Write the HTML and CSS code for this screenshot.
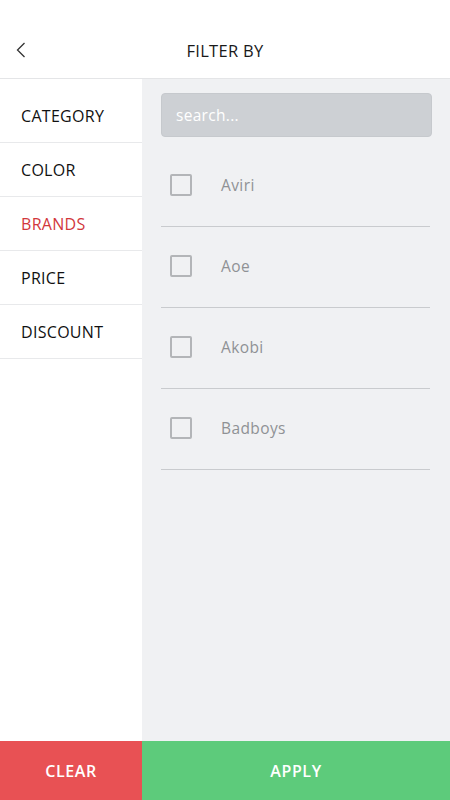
FILE: index.html
```html
<!DOCTYPE html>
<html>
<head>
<meta charset="utf-8">
<link rel="stylesheet" href="styles.css">
</head>
<body>
<div class="app">
  <header class="header">
    <button class="back" aria-label="Back">
      <svg width="10" height="16" viewBox="0 0 10 16"><path d="M8.5 1 L1.5 8 L8.5 15" fill="none" stroke="#333" stroke-width="1.3"/></svg>
    </button>
    <h1 class="title">FILTER BY</h1>
  </header>
  <div class="body">
    <nav class="menu">
      <div class="menu-item">CATEGORY</div>
      <div class="menu-item">COLOR</div>
      <div class="menu-item active">BRANDS</div>
      <div class="menu-item">PRICE</div>
      <div class="menu-item">DISCOUNT</div>
    </nav>
    <section class="panel">
      <div class="search">search...</div>
      <ul class="list">
        <li class="row"><span class="box"></span><span class="label">Aviri</span></li>
        <li class="row"><span class="box"></span><span class="label">Aoe</span></li>
        <li class="row"><span class="box"></span><span class="label">Akobi</span></li>
        <li class="row"><span class="box"></span><span class="label">Badboys</span></li>
      </ul>
    </section>
  </div>
  <footer class="footer">
    <button class="btn clear">CLEAR</button>
    <button class="btn apply">APPLY</button>
  </footer>
</div>
</body>
</html>
```
FILE: styles.css
```css
* { box-sizing: border-box; }
html, body { margin: 0; padding: 0; }
body {
  font-family: "Open Sans", "Noto Sans", sans-serif;
  background: #fff;
}
.app {
  width: 450px;
  height: 800px;
  display: flex;
  flex-direction: column;
}
.header {
  height: 79px;
  flex: none;
  position: relative;
  display: flex;
  align-items: center;
  justify-content: center;
  border-bottom: 1px solid #e4e5e7;
  padding-top: 22px;
}
.back {
  position: absolute;
  left: 16px;
  top: 42px;
  border: 0;
  background: none;
  padding: 0;
  display: flex;
}
.title {
  margin: 0;
  font-size: 16.5px;
  font-weight: 400;
  color: #1a1a1a;
  letter-spacing: 0.3px;
}
.body {
  flex: 1;
  display: flex;
  min-height: 0;
}
.menu {
  width: 142px;
  flex: none;
  background: #fff;
  padding-top: 10px;
}
.menu-item {
  height: 54px;
  border-bottom: 1px solid #e8e9eb;
  display: flex;
  align-items: center;
  padding-left: 21px;
  font-size: 16px;
  color: #111;
  letter-spacing: 0.3px;
}
.menu-item.active { color: #d2373c; }
.panel {
  flex: 1;
  background: #f0f1f3;
  padding: 14px 18px 0 19px;
}
.search {
  height: 44px;
  background: #cdd0d4;
  border: 1px solid #c6c9cd;
  border-radius: 4px;
  color: #fff;
  font-size: 15.5px;
  display: flex;
  align-items: center;
  padding-left: 14px;
  letter-spacing: 0.3px;
}
.list {
  list-style: none;
  margin: 9px 0 0;
  padding: 0 2px 0 0;
}
.row {
  height: 81px;
  display: flex;
  align-items: center;
  border-bottom: 1px solid #c9cbce;
  padding-left: 9px;
  padding-bottom: 2px;
}
.box {
  width: 22px;
  height: 22px;
  border: 2px solid #b3b5b8;
  border-radius: 2px;
  flex: none;
}
.label {
  margin-left: 29px;
  font-size: 15.5px;
  color: #8f9195;
  letter-spacing: 0.4px;
}
.footer {
  height: 59px;
  flex: none;
  display: flex;
}
.btn {
  border: 0;
  margin: 0;
  color: #fff;
  font-family: inherit;
  font-size: 16px;
  font-weight: 600;
  letter-spacing: 0.6px;
}
.clear { width: 142px; background: #e85154; }
.apply { flex: 1; background: #5dcb7b; }
```
